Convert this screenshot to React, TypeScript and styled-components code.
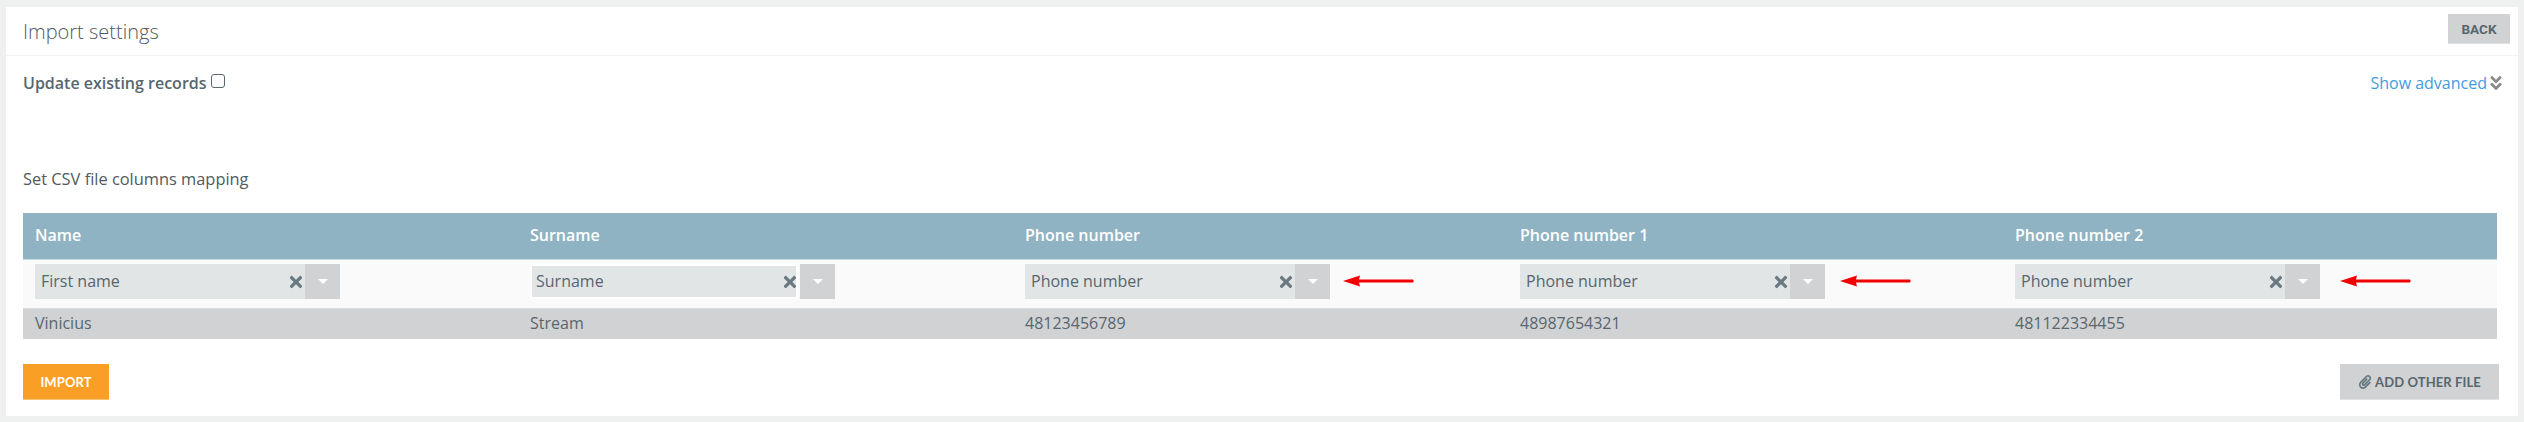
import React from 'react';
import styled, { createGlobalStyle } from 'styled-components';
import { FaAngleDoubleDown, FaPaperclip, FaTimes } from 'react-icons/fa';

const GlobalStyle = createGlobalStyle`
    html, body {
        margin: 0;
        background: #eff1f1;
        font-family: 'Open Sans', sans-serif;
    }
`;

const Page = styled.div`
    width: 2524px;
    height: 422px;
    padding: 7px 6px 6px;
    box-sizing: border-box;
`;

const Panel = styled.div`
    background: #fff;
    height: 409px;
    display: flex;
    flex-direction: column;
`;

const PanelHeader = styled.div`
    height: 49px;
    box-sizing: border-box;
    border-bottom: 1px solid #f2f3f3;
    padding: 7px 8px 0 17px;
    display: flex;
    justify-content: space-between;
    align-items: flex-start;
`;

const PanelTitle = styled.h3`
    margin: 5px 0 0;
    font-size: 20px;
    line-height: 26px;
    font-weight: 300;
    color: #4f5a60;
`;

const GreyButton = styled.button`
    border: 0;
    border-bottom: 1px solid #dfe1e2;
    background: #d0d2d4;
    color: #58666e;
    font-weight: 700;
    padding: 0;
    display: flex;
    align-items: center;
    justify-content: center;
`;

const BackButton = styled(GreyButton)`
    width: 62px;
    height: 30px;
    font-family: 'Roboto', sans-serif;
    font-size: 13.5px;
`;

const OptionsRow = styled.div`
    display: flex;
    justify-content: space-between;
    padding: 16px 13px 0 17px;
    height: 44px;
    box-sizing: border-box;
`;

const CheckLabel = styled.label`
    display: flex;
    align-items: flex-start;
    gap: 4px;
    font-size: 16px;
    line-height: 22px;
    font-weight: 600;
    color: #58666e;
`;

const CheckBox = styled.span`
    width: 12px;
    height: 12px;
    margin-top: 2px;
    border: 1px solid #58666e;
    border-radius: 3px;
`;

const AdvancedLink = styled.a`
    display: flex;
    align-items: flex-start;
    font-size: 16px;
    line-height: 22px;
    color: #3f9ce0;

    svg {
        color: #8a8a8a;
        margin-top: 2px;
    }
`;

const MappingLabel = styled.div`
    margin: 68px 0 0 17px;
    font-size: 16.4px;
    line-height: 21px;
    color: #4f5a60;
`;

const MappingTable = styled.div`
    width: 2474px;
    margin: 24px 0 0 17px;
`;

const TableRow = styled.div`
    display: grid;
    grid-template-columns: repeat(4, 495px) 1fr;
`;

const HeadRow = styled(TableRow)`
    height: 47px;
    box-sizing: border-box;
    background: #8fb3c3;
    border-bottom: 1px solid #c9dbe3;
`;

const HeadCell = styled.div`
    padding-left: 12px;
    font-size: 16px;
    line-height: 45px;
    font-weight: 600;
    color: #fff;
`;

const FilterRow = styled(TableRow)`
    height: 49px;
    background: #fafafa;
    border-bottom: 1px solid #dcdddf;
    box-sizing: border-box;
`;

const FilterCell = styled.div`
    padding: 4px 0 0 12px;
    display: flex;
    align-items: flex-start;
`;

const SelectBox = styled.div`
    width: 305px;
    height: 35px;
    display: flex;
`;

const SelectValue = styled.div<{ $focused?: boolean }>`
    flex: 1;
    box-sizing: border-box;
    display: flex;
    align-items: center;
    justify-content: space-between;
    padding: 0 0 2px ${(props) => (props.$focused ? '4px' : '6px')};
    background: #e1e5e6;
    color: #58666e;
    font-size: 16px;
    border: ${(props) => (props.$focused ? '2px solid #fff' : '0')};
    margin-right: ${(props) => (props.$focused ? '2px' : '0')};

    svg {
        color: #6a7a82;
        margin: 2px ${(props) => (props.$focused ? '-3px' : '0')} 0 0;
    }
`;

const SelectToggle = styled.div`
    width: 35px;
    background: #d0d2d4;
    display: flex;
    align-items: center;
    justify-content: center;

    &::after {
        content: '';
        border-left: 5px solid transparent;
        border-right: 5px solid transparent;
        border-top: 5px solid #fff;
    }
`;

const ArrowIcon = styled.svg<{ $gap: number }>`
    margin: 10px 0 0 ${(props) => props.$gap}px;
`;

const DataRow = styled(TableRow)`
    height: 30px;
    background: #d1d2d4;
`;

const DataCell = styled.div`
    padding-left: 12px;
    font-size: 16px;
    line-height: 28px;
    color: #58666e;
`;

const FooterRow = styled.div`
    display: flex;
    justify-content: space-between;
    padding: 25px 19px 0 17px;
`;

const ImportButton = styled.button`
    width: 86px;
    height: 36px;
    padding: 0;
    border: 0;
    border-bottom: 1px solid #ffc36f;
    background: #fa9f25;
    color: #fff;
    font-family: 'Lato', sans-serif;
    font-weight: 700;
    font-size: 13px;
    letter-spacing: 0.1px;
`;

const AddFileButton = styled(GreyButton)`
    width: 159px;
    height: 36px;
    gap: 3px;
    font-family: 'Lato', sans-serif;
    font-size: 13px;
    letter-spacing: 0.1px;

    svg {
        color: #6a7a82;
    }
`;

const COLUMNS = [
    { title: 'Name', mapped: 'First name', sample: 'Vinicius' },
    { title: 'Surname', mapped: 'Surname', sample: 'Stream', focused: true },
    { title: 'Phone number', mapped: 'Phone number', sample: '48123456789', arrowGap: 13 },
    { title: 'Phone number 1', mapped: 'Phone number', sample: '48987654321', arrowGap: 15 },
    { title: 'Phone number 2', mapped: 'Phone number', sample: '481122334455', arrowGap: 20 },
];

const RedArrow = ({ gap }: { gap: number }) => (
    <ArrowIcon $gap={gap} width="72" height="14" viewBox="0 0 72 14">
        <path d="M0 7 L17 1.5 L16 5.5 L70 5.5 Q71.5 7 70 8.5 L16 8.5 L17 12.5 Z" fill="#f00000" />
    </ArrowIcon>
);

export default function App() {
    return (
        <Page>
            <GlobalStyle />
            <Panel>
                <PanelHeader>
                    <PanelTitle>Import settings</PanelTitle>
                    <BackButton>BACK</BackButton>
                </PanelHeader>
                <OptionsRow>
                    <CheckLabel>
                        Update existing records
                        <CheckBox />
                    </CheckLabel>
                    <AdvancedLink>
                        Show advanced
                        <FaAngleDoubleDown size={18} />
                    </AdvancedLink>
                </OptionsRow>
                <MappingLabel>Set CSV file columns mapping</MappingLabel>
                <MappingTable>
                    <HeadRow>
                        {COLUMNS.map((col) => (
                            <HeadCell key={col.title}>{col.title}</HeadCell>
                        ))}
                    </HeadRow>
                    <FilterRow>
                        {COLUMNS.map((col) => (
                            <FilterCell key={col.title}>
                                <SelectBox>
                                    <SelectValue $focused={col.focused}>
                                        {col.mapped}
                                        <FaTimes size={18} />
                                    </SelectValue>
                                    <SelectToggle />
                                </SelectBox>
                                {col.arrowGap ? <RedArrow gap={col.arrowGap} /> : null}
                            </FilterCell>
                        ))}
                    </FilterRow>
                    <DataRow>
                        {COLUMNS.map((col) => (
                            <DataCell key={col.title}>{col.sample}</DataCell>
                        ))}
                    </DataRow>
                </MappingTable>
                <FooterRow>
                    <ImportButton>IMPORT</ImportButton>
                    <AddFileButton>
                        <FaPaperclip size={14} />
                        ADD OTHER FILE
                    </AddFileButton>
                </FooterRow>
            </Panel>
        </Page>
    );
}
